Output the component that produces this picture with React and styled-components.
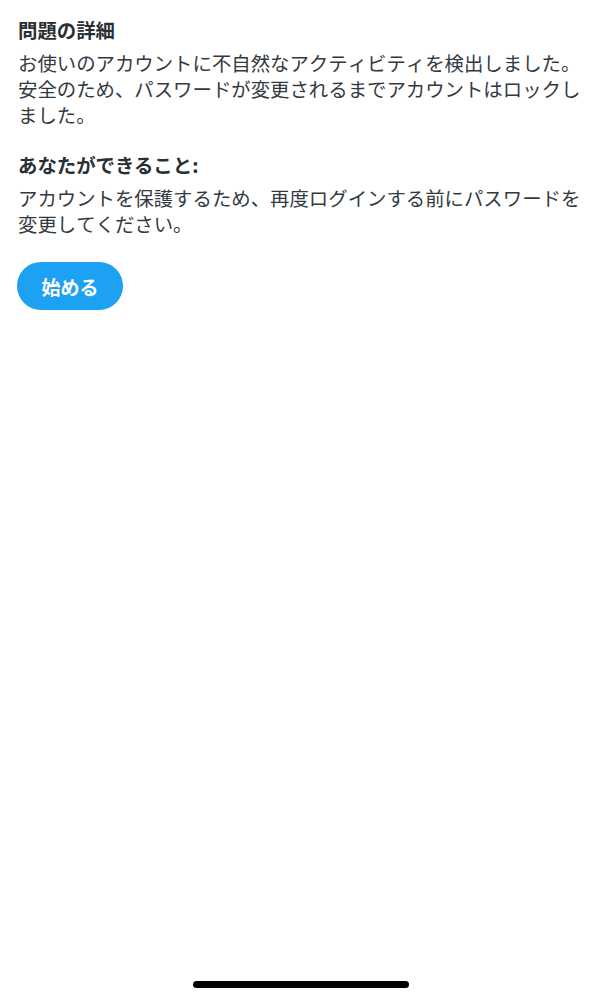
import React from "react";
import styled, { createGlobalStyle } from "styled-components";

const Global = createGlobalStyle`
  html, body { margin: 0; padding: 0; background: #fff; }
  body { font-family: "Noto Sans CJK JP", "Noto Sans", sans-serif; }
`;

const Page = styled.div`
  width: 602px;
  height: 999px;
  display: flex;
  flex-direction: column;
  box-sizing: border-box;
  padding: 15px 18px 0 18px;
  color: #292f33;
`;

const Section = styled.section`
  display: flex;
  flex-direction: column;
  margin-bottom: ${(p) => p.$mb || 0}px;
`;

const Heading = styled.h2`
  margin: 0 0 5px 0;
  font-size: 19.4px;
  font-weight: 700;
  line-height: 30px;
  letter-spacing: 0;
`;

const Body = styled.p`
  margin: 0;
  font-size: 19.4px;
  font-weight: 400;
  line-height: 26px;
  color: #333a3f;
  text-spacing-trim: space-all;
  font-kerning: none;
`;

const Button = styled.button`
  align-self: flex-start;
  width: 106px;
  height: 48px;
  border: none;
  border-radius: 24px;
  background: #1da1f2;
  color: #fff;
  font-family: inherit;
  font-size: 19px;
  font-weight: 700;
  padding: 0;
  margin-left: -1px;
`;

const Spacer = styled.div`
  flex: 1;
`;

const HomeIndicator = styled.div`
  align-self: center;
  width: 216px;
  height: 7px;
  border-radius: 4px;
  background: #000;
  margin-bottom: 11px;
`;

export default function App() {
  return (
    <>
      <Global />
      <Page>
        <Section $mb={22}>
          <Heading>問題の詳細</Heading>
          <Body>
            お使いのアカウントに不自然なアクティビティを検出しました。安全のため、パスワードが変更されるまでアカウントはロックしました。
          </Body>
        </Section>
        <Section $mb={25}>
          <Heading>あなたができること:</Heading>
          <Body>
            アカウントを保護するため、再度ログインする前にパスワードを変更してください。
          </Body>
        </Section>
        <Button>始める</Button>
        <Spacer />
        <HomeIndicator />
      </Page>
    </>
  );
}
